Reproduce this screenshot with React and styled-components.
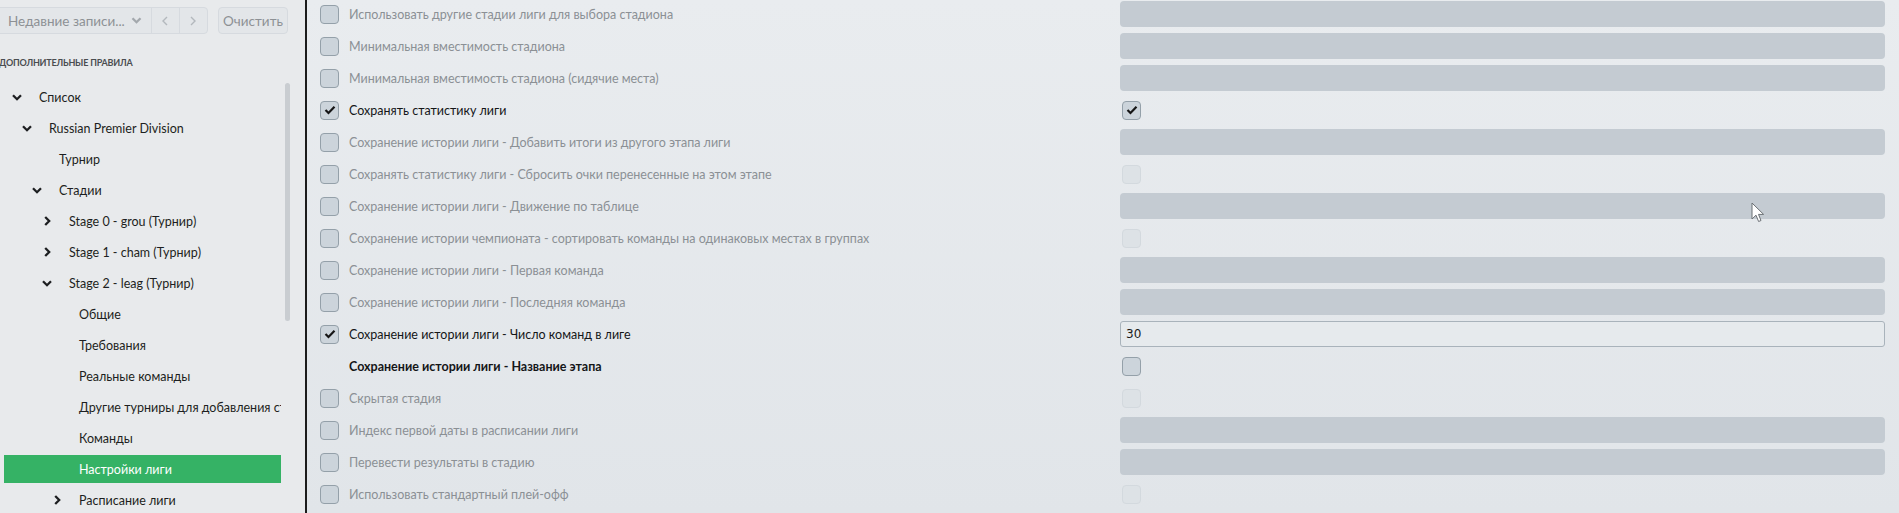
import React from "react";
import styled, { createGlobalStyle } from "styled-components";

const GlobalStyle = createGlobalStyle`
  html, body { margin: 0; padding: 0; }
  body {
    font-family: Lato, "Liberation Sans", sans-serif;
    background: #e6e9ec;
    overflow: hidden;
  }
`;

const Page = styled.div`
  display: flex;
  width: 1899px;
  height: 513px;
  overflow: hidden;
  position: relative;
`;

const Sidebar = styled.aside`
  width: 305px;
  flex: none;
  display: flex;
  flex-direction: column;
  background: #e8eaec;
  border-right: 2px solid #1c1c1c;
  overflow: hidden;
`;

const TopBar = styled.div`
  display: flex;
  gap: 10px;
  padding-top: 7px;
  height: 27px;
  flex: none;
`;

const Group = styled.div`
  display: flex;
  width: 212px;
  margin-left: -4px;
  height: 27px;
  box-sizing: border-box;
  border: 1px solid #d6dadf;
  border-radius: 4px;
  background: #e3e6e9;
`;

const Dropdown = styled.div`
  width: 158px;
  box-sizing: border-box;
  display: flex;
  align-items: center;
  justify-content: space-between;
  padding: 0 9px 0 11px;
  font-size: 13.5px;
  color: #8d9195;
`;

const NavBtn = styled.div`
  width: 28px;
  display: flex;
  align-items: center;
  justify-content: center;
  border-left: 1px solid #d6dadf;
`;

const ClearBtn = styled.div`
  width: 70px;
  height: 27px;
  box-sizing: border-box;
  border: 1px solid #d6dadf;
  border-radius: 4px;
  background: #e3e6e9;
  display: flex;
  align-items: center;
  justify-content: center;
  font-size: 13.5px;
  color: #8d9195;
`;

const SectionTitle = styled.div`
  margin-top: 23px;
  margin-left: -1px;
  height: 12px;
  line-height: 12px;
  font-size: 9px;
  font-weight: 700;
  color: #4a4d50;
  letter-spacing: -0.2px;
  white-space: nowrap;
`;

const TreeArea = styled.div`
  display: flex;
  margin-top: 14px;
  flex: 1;
  min-height: 0;
`;

const Tree = styled.div`
  width: 277px;
  margin-left: 4px;
  overflow: hidden;
  flex: none;
`;

const TreeRow = styled.div`
  height: 28px;
  margin-bottom: 3px;
  display: flex;
  align-items: center;
  padding-left: ${(p) => 8 + p.$level * 10}px;
  background: ${(p) => (p.$selected ? "#35b265" : "transparent")};
  color: ${(p) => (p.$selected ? "#ffffff" : "#1d1f21")};
  font-size: 12.5px;
  white-space: nowrap;
`;

const Toggle = styled.span`
  width: 10px;
  flex: none;
  display: flex;
  align-items: center;
  justify-content: center;
  margin-right: 17px;
`;

const Scrollbar = styled.div`
  width: 5px;
  height: 238px;
  margin-left: 4px;
  border-radius: 3px;
  background: #c9cdd1;
  flex: none;
`;

const Content = styled.main`
  flex: 1;
  padding: 0 14px 0 13px;
  background: linear-gradient(180deg, #e9ecef 0%, #e1e5e9 100%);
`;

const Rows = styled.div`
  margin-top: -2px;
  display: flex;
  flex-direction: column;
`;

const Row = styled.div`
  display: grid;
  grid-template-columns: 1fr 765px;
  height: 32px;
  align-items: center;
`;

const LabelCell = styled.div`
  display: flex;
  align-items: center;
  gap: 10px;
  padding-left: ${(p) => (p.$noBox ? "29px" : "0")};
  font-size: 12.5px;
  color: ${(p) => (p.$enabled ? "#141618" : "#8b9095")};
  font-weight: ${(p) => (p.$bold ? 700 : 400)};
  white-space: nowrap;
`;

const Box = styled.span`
  width: 19px;
  height: 19px;
  box-sizing: border-box;
  border-radius: 4px;
  border: 1px solid ${(p) => (p.$faint ? "#d3d9de" : "#94a0a9")};
  background: ${(p) => (p.$faint ? "#dde2e6" : "#ccd4db")};
  display: flex;
  align-items: center;
  justify-content: center;
  flex: none;
  margin-left: ${(p) => (p.$right ? "2px" : "0")};
`;

const FieldCell = styled.div`
  display: flex;
  align-items: center;
`;

const DisabledInput = styled.div`
  width: 100%;
  height: 26px;
  border-radius: 4px;
  background: #c4cbd2;
`;

const TextInput = styled.div`
  width: 100%;
  height: 26px;
  box-sizing: border-box;
  border: 1px solid #a9b3bb;
  border-radius: 3px;
  background: #e6eaed;
  padding-left: 5px;
  display: flex;
  align-items: center;
  font-family: "DejaVu Sans", sans-serif;
  font-size: 12px;
  color: #1a1a1a;
`;

const Cursor = styled.svg`
  position: absolute;
  left: 1751px;
  top: 202px;
  pointer-events: none;
`;

const ChevronDown = ({ color = "#1d1f21", w = 10 }) => (
  <svg width={w} height="7" viewBox="0 0 10 7">
    <polyline points="1,1.2 5,5.2 9,1.2" fill="none" stroke={color} strokeWidth="2.3" />
  </svg>
);

const ChevronRight = ({ color = "#1d1f21" }) => (
  <svg width="7" height="10" viewBox="0 0 7 10">
    <polyline points="1.2,1 5.2,5 1.2,9" fill="none" stroke={color} strokeWidth="2.3" />
  </svg>
);

const Check = () => (
  <svg width="12" height="10" viewBox="0 0 12 10">
    <polyline points="1.5,5 4.5,8 10.5,1.8" fill="none" stroke="#151515" strokeWidth="2.2" />
  </svg>
);

const tree = [
  { t: "Список", l: 0, c: "down" },
  { t: "Russian Premier Division", l: 1, c: "down" },
  { t: "Турнир", l: 2 },
  { t: "Стадии", l: 2, c: "down" },
  { t: "Stage 0 - grou (Турнир)", l: 3, c: "right" },
  { t: "Stage 1 - cham (Турнир)", l: 3, c: "right" },
  { t: "Stage 2 - leag (Турнир)", l: 3, c: "down" },
  { t: "Общие", l: 4 },
  { t: "Требования", l: 4 },
  { t: "Реальные команды", l: 4 },
  { t: "Другие турниры для добавления стадионов", l: 4 },
  { t: "Команды", l: 4 },
  { t: "Настройки лиги", l: 4, sel: true },
  { t: "Расписание лиги", l: 4, c: "right" },
];

// left: "off" | "on" | "none"; right: "input" | "faint" | "check" | "box" | "text"
const rows = [
  { t: "Использовать другие стадии лиги для выбора стадиона", left: "off", right: "input" },
  { t: "Минимальная вместимость стадиона", left: "off", right: "input" },
  { t: "Минимальная вместимость стадиона (сидячие места)", left: "off", right: "input" },
  { t: "Сохранять статистику лиги", left: "on", right: "check" },
  { t: "Сохранение истории лиги - Добавить итоги из другого этапа лиги", left: "off", right: "input" },
  { t: "Сохранять статистику лиги - Сбросить очки перенесенные на этом этапе", left: "off", right: "faint" },
  { t: "Сохранение истории лиги - Движение по таблице", left: "off", right: "input" },
  { t: "Сохранение истории чемпионата - сортировать команды на одинаковых местах в группах", left: "off", right: "faint" },
  { t: "Сохранение истории лиги - Первая команда", left: "off", right: "input" },
  { t: "Сохранение истории лиги - Последняя команда", left: "off", right: "input" },
  { t: "Сохранение истории лиги - Число команд в лиге", left: "on", right: "text", value: "30" },
  { t: "Сохранение истории лиги - Название этапа", left: "none", right: "box", bold: true },
  { t: "Скрытая стадия", left: "off", right: "faint" },
  { t: "Индекс первой даты в расписании лиги", left: "off", right: "input" },
  { t: "Перевести результаты в стадию", left: "off", right: "input" },
  { t: "Использовать стандартный плей-офф", left: "off", right: "faint" },
];

function Field({ row }) {
  switch (row.right) {
    case "input":
      return <DisabledInput />;
    case "faint":
      return <Box $right $faint />;
    case "check":
      return (
        <Box $right>
          <Check />
        </Box>
      );
    case "box":
      return <Box $right />;
    case "text":
      return <TextInput>{row.value}</TextInput>;
    default:
      return null;
  }
}

export default function App() {
  return (
    <>
      <GlobalStyle />
      <Page>
        <Sidebar>
          <TopBar>
            <Group>
              <Dropdown>
                <span>Недавние записи...</span>
                <ChevronDown color="#a3a8ad" w={11} />
              </Dropdown>
              <NavBtn>
                <svg width="6" height="10" viewBox="0 0 6 10">
                  <polyline points="5,1 1,5 5,9" fill="none" stroke="#b3b8bd" strokeWidth="1.4" />
                </svg>
              </NavBtn>
              <NavBtn>
                <svg width="6" height="10" viewBox="0 0 6 10">
                  <polyline points="1,1 5,5 1,9" fill="none" stroke="#b3b8bd" strokeWidth="1.4" />
                </svg>
              </NavBtn>
            </Group>
            <ClearBtn>Очистить</ClearBtn>
          </TopBar>
          <SectionTitle>ДОПОЛНИТЕЛЬНЫЕ ПРАВИЛА</SectionTitle>
          <TreeArea>
            <Tree>
              {tree.map((n, i) => (
                <TreeRow key={i} $level={n.l} $selected={n.sel}>
                  <Toggle>
                    {n.c === "down" && <ChevronDown />}
                    {n.c === "right" && <ChevronRight />}
                  </Toggle>
                  {n.t}
                </TreeRow>
              ))}
            </Tree>
            <Scrollbar />
          </TreeArea>
        </Sidebar>
        <Content>
          <Rows>
            {rows.map((r, i) => (
              <Row key={i}>
                <LabelCell $enabled={r.left !== "off"} $bold={r.bold} $noBox={r.left === "none"}>
                  {r.left !== "none" && <Box>{r.left === "on" && <Check />}</Box>}
                  {r.t}
                </LabelCell>
                <FieldCell>
                  <Field row={r} />
                </FieldCell>
              </Row>
            ))}
          </Rows>
        </Content>
        <Cursor width="14" height="22" viewBox="0 0 14 22">
          <path d="M1 1 L1 17 L5 13.2 L7.6 19.5 L10 18.5 L7.5 12.4 L12.6 12.4 Z" fill="#ffffff" stroke="#6b7075" strokeWidth="1" strokeLinejoin="round" />
        </Cursor>
      </Page>
    </>
  );
}
